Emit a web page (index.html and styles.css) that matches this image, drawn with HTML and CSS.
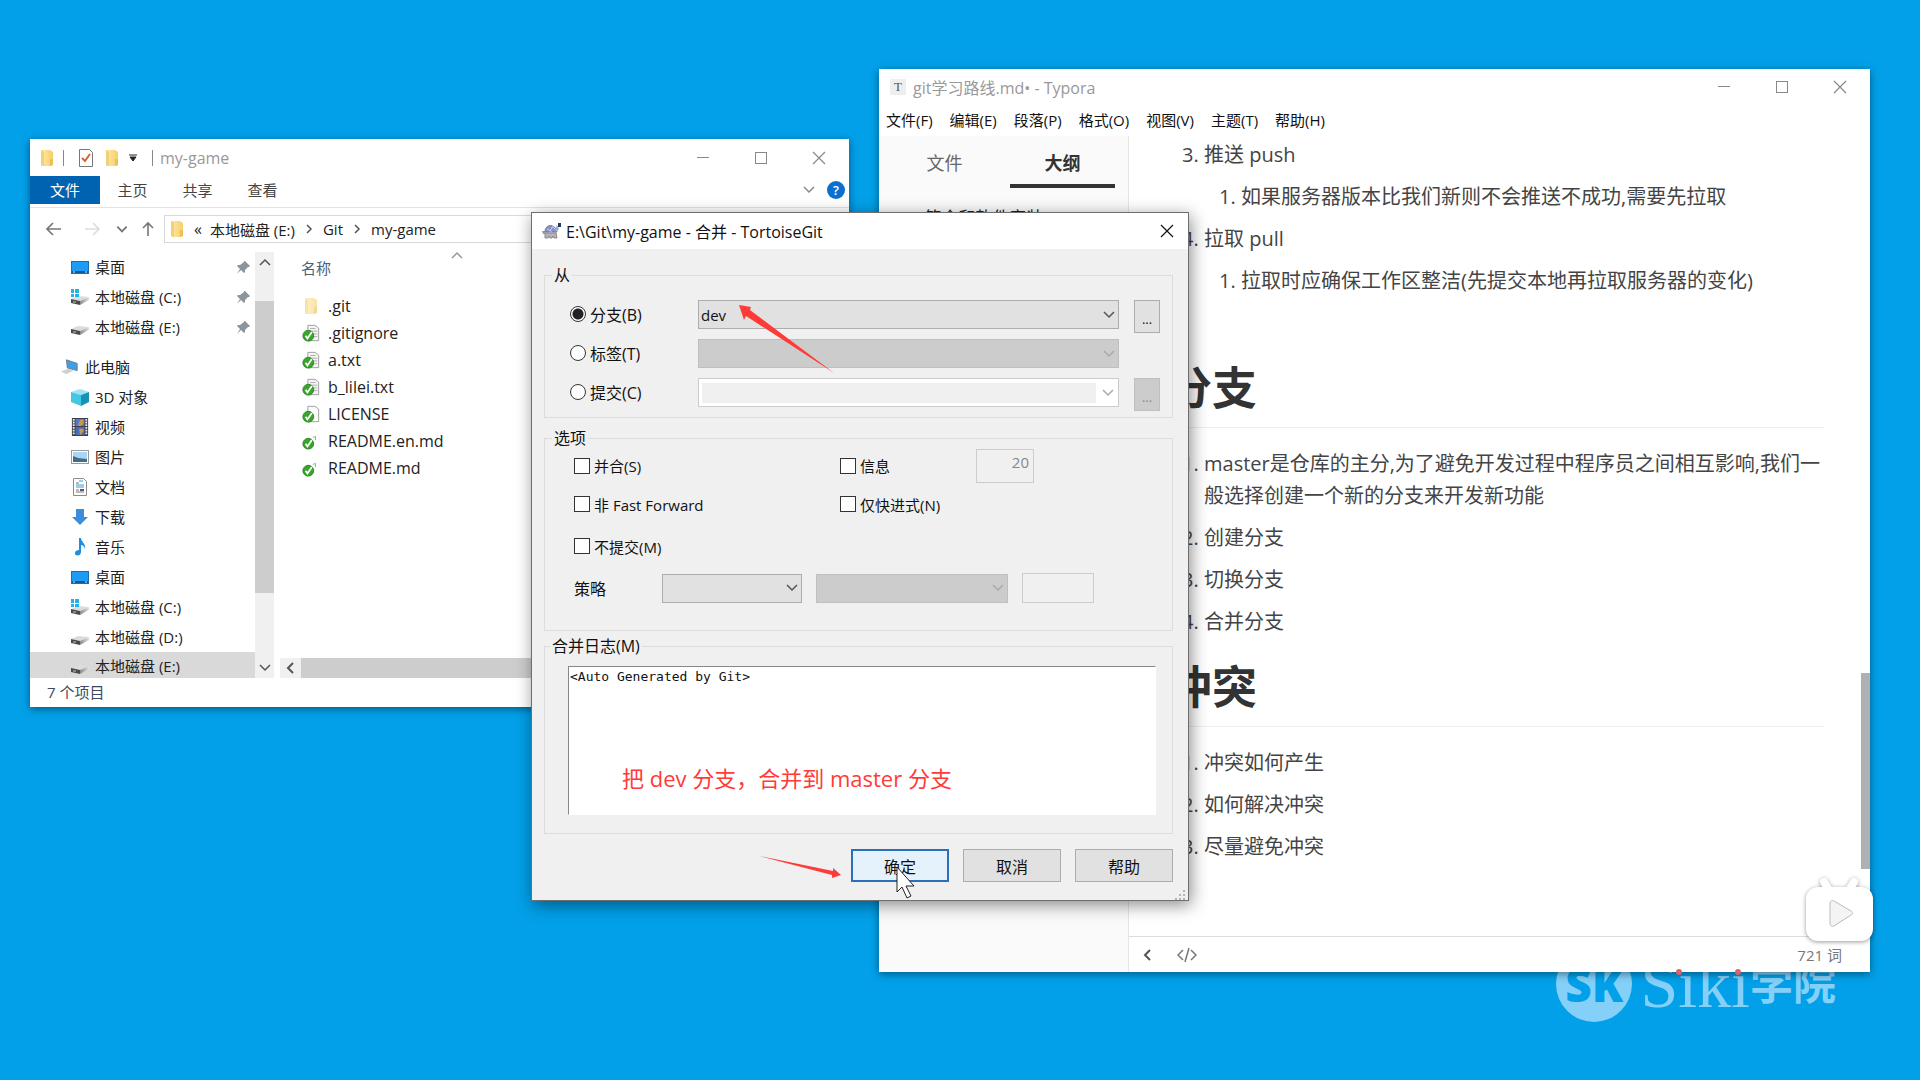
FILE: index.html
```html
<!DOCTYPE html>
<html lang="zh-CN">

<head>
    <meta charset="UTF-8">
    <meta name="viewport" content="width=device-width, initial-scale=1.0">
    <title>TortoiseGit 合并</title>
    <link rel="stylesheet" href="styles.css">
</head>

<body>

    <!-- Shared icons -->
    <svg class="sprite" aria-hidden="true">
        <defs>
            <linearGradient id="gFolder" x1="0" x2="1">
                <stop offset="0" stop-color="#ffe9a6" />
                <stop offset="1" stop-color="#f5cf6a" />
            </linearGradient>
            <linearGradient id="gDisk" x1="0" x2="1">
                <stop offset="0" stop-color="#8b8b8b" />
                <stop offset="1" stop-color="#e2e2e2" />
            </linearGradient>
            <symbol id="folder" viewBox="0 0 18 18">
                <path d="M3 1h9l3 2v13l-3 1H3z" fill="url(#gFolder)" />
                <path d="M3 1l3 2v14l-3-1z" fill="#f3d078" />
                <path d="M12 10h3v6l-3 1z" fill="#eebf55" />
            </symbol>
            <symbol id="desktop" viewBox="0 0 18 18">
                <rect x="0.5" y="3.5" width="17" height="12" fill="#1e9bf5" stroke="#1570b8" />
                <path d="M1 14h16" stroke="#0d5b9c" stroke-width="2" />
                <path d="M2 14h2M14 14h2" stroke="#d8efff" stroke-width="1" />
            </symbol>
            <symbol id="disk" viewBox="0 0 18 18">
                <path d="M0 11l7-3 11 1-9 4z" fill="#dcdcdc" />
                <path d="M0 11l9 2v4l-9-2z" fill="#4a4a4a" />
                <path d="M9 13l9-4v3l-9 5z" fill="url(#gDisk)" />
                <path d="M2 14h3" stroke="#bcd8bc" />
            </symbol>
            <symbol id="windisk" viewBox="0 0 18 18">
                <use href="#disk" />
                <path d="M0 1h3v4H0zM4 1h4v4H4zM0 6h3v3H0zM4 6h4v3H4z" fill="#22b4e8" />
            </symbol>
            <symbol id="pc" viewBox="0 0 20 18">
                <path d="M6 1l12 4v8L7 10z" fill="#3c9fe8" stroke="#6c7a88" />
                <path d="M0 14l8-3 6 2-8 4z" fill="#d0d0d0" />
            </symbol>
            <symbol id="cube" viewBox="0 0 18 18">
                <path d="M0 4l9-3 9 3-8 3z" fill="#9be6f2" />
                <path d="M0 4l10 3v11L0 14z" fill="#43c7e2" />
                <path d="M10 7l8-3v10l-8 4z" fill="#1592b8" />
            </symbol>
            <symbol id="film" viewBox="0 0 18 20">
                <rect width="18" height="20" fill="#3c3c46" />
                <rect x="4" y="1" width="10" height="8" fill="#5b78c8" />
                <rect x="4" y="10" width="10" height="9" fill="#4d6ab8" />
                <path d="M9 2h4v4l-3 3H7zM8 12h5v3l-4 4z" fill="#c89a48" />
                <path d="M2 1v18M16 1v18" stroke="#eee" stroke-width="2" stroke-dasharray="2 1" />
            </symbol>
            <symbol id="image" viewBox="0 0 18 18">
                <rect x="0.5" y="2.5" width="17" height="13" fill="#fff" stroke="#9a9a9a" />
                <rect x="2" y="4" width="14" height="10" fill="#a9d4f5" />
                <path d="M2 8l5 2 9 1v3H2z" fill="#3f6f84" />
            </symbol>
            <symbol id="doc" viewBox="0 0 18 18">
                <path d="M2.5 0.5h10l3 3v14h-13z" fill="#fff" stroke="#8c8c8c" />
                <path d="M5 5h3M5 12h3M5 14h8" stroke="#777" />
                <path d="M8 3h4M5 7h8M5 9h8" stroke="#3c9ad0" />
                <path d="M9 11h4v2H9z" fill="#557" />
            </symbol>
            <symbol id="down" viewBox="0 0 18 18">
                <path d="M5 1h8v8h4l-8 8-8-8h4z" fill="#3c8cdc" />
            </symbol>
            <symbol id="music" viewBox="0 0 18 18">
                <path d="M8 0h2c0 4 5 5 4 11-1-3-2-4-4-4v7c0 5-7 4-6 1 0-2 2-3 4-3z" fill="#1e8ee0" />
            </symbol>
            <symbol id="pin" viewBox="0 0 14 14">
                <path d="M8 1l5 5-1 1h-1L8 10v2l-1 1-3-3-4 4 3-5-3-3 1-1h2l4-3V1z" fill="#8c949c" />
            </symbol>
            <symbol id="txtok" viewBox="0 0 18 20">
                <path d="M5.5 1.5h8l4 3v14h-12z" fill="#f4f4f4" stroke="#999" />
                <path d="M8 5h6M8 8h8M10 11h6M12 14h4" stroke="#aaa" />
                <use href="#ok" />
            </symbol>
            <symbol id="blankok" viewBox="0 0 18 20">
                <path d="M5.5 1.5h8l4 3v14h-12z" fill="#fbfbfb" stroke="#999" />
                <use href="#ok" />
            </symbol>
            <symbol id="mdok" viewBox="0 0 18 20">
                <path d="M11 6l3-1v4" stroke="#9a9a9a" fill="none" stroke-width="1" />
                <use href="#ok" />
            </symbol>
            <g id="ok">
                <circle cx="6" cy="13" r="6" fill="#3aa52c" stroke="#23831b" stroke-width="1" />
                <path d="M3 13l2 3 5-7" fill="none" stroke="#fff" stroke-width="2" />
            </g>
            <symbol id="chevD" viewBox="0 0 12 12">
                <path d="M1 3l5 5 5-5" fill="none" stroke="currentColor" stroke-width="1.5" />
            </symbol>
            <symbol id="chevU" viewBox="0 0 12 12">
                <path d="M1 9l5-5 5 5" fill="none" stroke="currentColor" stroke-width="1.5" />
            </symbol>
            <symbol id="chevL" viewBox="0 0 12 12">
                <path d="M9 1L4 6l5 5" fill="none" stroke="currentColor" stroke-width="2" />
            </symbol>
            <symbol id="chevR" viewBox="0 0 12 12">
                <path d="M4 2l4 4-4 4" fill="none" stroke="currentColor" stroke-width="1.5" />
            </symbol>
            <symbol id="min" viewBox="0 0 14 14">
                <path d="M1 6.5h12" stroke="currentColor" />
            </symbol>
            <symbol id="max" viewBox="0 0 14 14">
                <rect x="1.5" y="1.5" width="11" height="11" fill="none" stroke="currentColor" />
            </symbol>
            <symbol id="close" viewBox="0 0 14 14">
                <path d="M1 1l12 12M13 1L1 13" stroke="currentColor" stroke-width="1.2" />
            </symbol>
        </defs>
    </svg>

    <!-- Wallpaper logo -->
    <div class="watermark">
        <span class="wm-badge">SK</span>
        <span class="wm-latin">Siki</span>
        <span class="wm-han">学院</span>
    </div>

    <!-- File explorer -->
    <section class="window explorer">
        <header class="ex-title">
            <svg class="ic"><use href="#folder" /></svg>
            <i class="bar"></i>
            <svg class="ic task" viewBox="0 0 18 18">
                <path d="M2.5 0.5h10l3 3v14h-13z" fill="#fff" stroke="#777" />
                <path d="M5 9l3 3 5-7" fill="none" stroke="#e0602a" stroke-width="2" />
            </svg>
            <svg class="ic"><use href="#folder" /></svg>
            <svg class="quick" viewBox="0 0 8 8"><path d="M0 1h8M1 3h6L4 7z" stroke="#222" fill="#222" /></svg>
            <i class="bar"></i>
            <span class="ex-name">my-game</span>
            <div class="win-buttons">
                <button aria-label="最小化"><svg><use href="#min" /></svg></button>
                <button aria-label="最大化"><svg><use href="#max" /></svg></button>
                <button aria-label="关闭"><svg><use href="#close" /></svg></button>
            </div>
        </header>
        <nav class="ribbon">
            <button class="active">文件</button>
            <button>主页</button>
            <button>共享</button>
            <button>查看</button>
            <svg class="chev fold"><use href="#chevD" /></svg>
            <span class="help">?</span>
        </nav>
        <div class="address">
            <button aria-label="后退"><svg viewBox="0 0 16 14"><path d="M15 7H1M7 1L1 7l6 6" /></svg></button>
            <button class="off" aria-label="前进"><svg viewBox="0 0 16 14"><path d="M1 7h14M9 1l6 6-6 6" /></svg></button>
            <button class="small" aria-label="历史"><svg viewBox="0 0 12 12"><path d="M2 4l4 4 4-4" /></svg></button>
            <button class="up" aria-label="向上"><svg viewBox="0 0 14 16"><path d="M7 15V2M2 7l5-5 5 5" /></svg></button>
            <div class="path">
                <svg class="ic"><use href="#folder" /></svg>
                <span class="laquo">«</span>
                <a href="#">本地磁盘 (E:)</a>
                <svg class="chev"><use href="#chevR" /></svg>
                <a href="#">Git</a>
                <svg class="chev"><use href="#chevR" /></svg>
                <a href="#">my-game</a>
            </div>
        </div>
        <div class="ex-body">
            <ul class="tree">
                <li><svg class="ic"><use href="#desktop" /></svg>桌面<svg class="pin"><use href="#pin" /></svg></li>
                <li><svg class="ic"><use href="#windisk" /></svg>本地磁盘 (C:)<svg class="pin"><use href="#pin" /></svg></li>
                <li><svg class="ic"><use href="#disk" /></svg>本地磁盘 (E:)<svg class="pin"><use href="#pin" /></svg></li>
                <li class="root"><svg class="ic"><use href="#pc" /></svg>此电脑</li>
                <li><svg class="ic"><use href="#cube" /></svg>3D 对象</li>
                <li><svg class="ic"><use href="#film" /></svg>视频</li>
                <li><svg class="ic"><use href="#image" /></svg>图片</li>
                <li><svg class="ic"><use href="#doc" /></svg>文档</li>
                <li><svg class="ic"><use href="#down" /></svg>下载</li>
                <li><svg class="ic"><use href="#music" /></svg>音乐</li>
                <li><svg class="ic"><use href="#desktop" /></svg>桌面</li>
                <li><svg class="ic"><use href="#windisk" /></svg>本地磁盘 (C:)</li>
                <li><svg class="ic"><use href="#disk" /></svg>本地磁盘 (D:)</li>
                <li class="selected"><svg class="ic"><use href="#disk" /></svg>本地磁盘 (E:)</li>
            </ul>
            <div class="vscroll">
                <svg class="chev"><use href="#chevU" /></svg>
                <div class="track"><i></i></div>
                <svg class="chev"><use href="#chevD" /></svg>
            </div>
            <div class="files">
                <svg class="chev sort"><use href="#chevU" /></svg>
                <table>
                    <thead>
                        <tr><th scope="col">名称</th></tr>
                    </thead>
                    <tbody>
                        <tr><td><svg class="ic pale"><use href="#folder" /></svg>.git</td></tr>
                        <tr><td><svg class="ic"><use href="#txtok" /></svg>.gitignore</td></tr>
                        <tr><td><svg class="ic"><use href="#txtok" /></svg>a.txt</td></tr>
                        <tr><td><svg class="ic"><use href="#txtok" /></svg>b_lilei.txt</td></tr>
                        <tr><td><svg class="ic"><use href="#blankok" /></svg>LICENSE</td></tr>
                        <tr><td><svg class="ic"><use href="#mdok" /></svg>README.en.md</td></tr>
                        <tr><td><svg class="ic"><use href="#mdok" /></svg>README.md</td></tr>
                    </tbody>
                </table>
                <div class="hscroll"><svg class="chev"><use href="#chevL" /></svg><i></i></div>
            </div>
        </div>
        <footer class="ex-status">7 个项目</footer>
    </section>

    <!-- Typora -->
    <section class="window typora">
        <header class="ty-title">
            <span class="ty-logo">T</span>
            <span>git学习路线.md• - Typora</span>
            <div class="win-buttons">
                <button aria-label="最小化"><svg><use href="#min" /></svg></button>
                <button aria-label="最大化"><svg><use href="#max" /></svg></button>
                <button aria-label="关闭"><svg><use href="#close" /></svg></button>
            </div>
        </header>
        <nav class="menu">
            <button>文件(F)</button>
            <button>编辑(E)</button>
            <button>段落(P)</button>
            <button>格式(O)</button>
            <button>视图(V)</button>
            <button>主题(T)</button>
            <button>帮助(H)</button>
        </nav>
        <div class="ty-body">
            <aside class="outline">
                <div class="tabs">
                    <button>文件</button>
                    <button class="active">大纲</button>
                </div>
                <a href="#" class="outline-item">5. 简介和软件安装</a>
            </aside>
            <div class="editor">
                <article>
                    <ol start="3">
                        <li>推送 push
                            <ol>
                                <li>如果服务器版本比我们新则不会推送不成功,需要先拉取</li>
                            </ol>
                        </li>
                        <li>拉取 pull
                            <ol>
                                <li>拉取时应确保工作区整洁(先提交本地再拉取服务器的变化)</li>
                            </ol>
                        </li>
                    </ol>
                    <h1 class="spaced">分支</h1>
                    <ol>
                        <li>master是仓库的主分,为了避免开发过程中程序员之间相互影响,我们一般选择创建一个新的分支来开发新功能</li>
                        <li>创建分支</li>
                        <li>切换分支</li>
                        <li>合并分支</li>
                    </ol>
                    <h1>冲突</h1>
                    <ol>
                        <li>冲突如何产生</li>
                        <li>如何解决冲突</li>
                        <li>尽量避免冲突</li>
                    </ol>
                    <i class="thumb"></i>
                </article>
                <footer class="ty-status">
                    <button aria-label="侧边栏"><svg class="chev"><use href="#chevL" /></svg></button>
                    <button aria-label="源代码模式"><svg class="code" viewBox="0 0 20 14"><path d="M6 2L1 7l5 5M14 2l5 5-5 5M12 0L8 14" /></svg></button>
                    <span>721 词</span>
                </footer>
            </div>
        </div>
    </section>

    <!-- Merge dialog -->
    <section class="window dialog">
        <header class="dl-title">
            <svg class="tortoise" viewBox="0 0 20 16">
                <path d="M3 9c0-8 10-9 12 0z" fill="#8a94cc" stroke="#666e9c" />
                <path d="M5 6l3 2 3-5M9 8v2M11 4l3 3" fill="none" stroke="#c9cff0" />
                <path d="M3 10h11l1 5h-3l-1-2-1 2H8l-1-2-1 2H3z" fill="#b4b4b8" stroke="#88888c" stroke-width="1" />
                <path d="M0 8h3v3H1z" fill="#999" />
                <path d="M13 6l2-4 2 4-3 3z" fill="#a3a8c8" />
                <rect x="16" y="0" width="3" height="4" fill="#223a5c" />
            </svg>
            <span>E:\Git\my-game - 合并 - TortoiseGit</span>
            <button class="dl-close" aria-label="关闭"><svg><use href="#close" /></svg></button>
        </header>
        <form class="dl-body">
            <fieldset class="from">
                <legend>从</legend>
                <label class="opt"><input type="radio" name="from" checked>分支(B)</label>
                <div class="combo">
                    <select aria-label="分支">
                        <option>dev</option>
                    </select>
                    <svg class="chev"><use href="#chevD" /></svg>
                </div>
                <button type="button" class="more">...</button>

                <label class="opt"><input type="radio" name="from">标签(T)</label>
                <div class="combo">
                    <select aria-label="标签" disabled></select>
                    <svg class="chev"><use href="#chevD" /></svg>
                </div>
                <span></span>

                <label class="opt"><input type="radio" name="from">提交(C)</label>
                <div class="combo editable">
                    <input type="text" aria-label="提交" disabled>
                    <svg class="chev"><use href="#chevD" /></svg>
                </div>
                <button type="button" class="more" disabled>...</button>
            </fieldset>

            <fieldset class="options">
                <legend>选项</legend>
                <label class="opt"><input type="checkbox">并合(S)</label>
                <label class="opt"><input type="checkbox">信息</label>
                <input class="num" type="text" value="20" aria-label="信息数量" disabled>
                <label class="opt"><input type="checkbox">非 Fast Forward</label>
                <label class="opt wide"><input type="checkbox">仅快进式(N)</label>
                <label class="opt full"><input type="checkbox">不提交(M)</label>
                <div class="strategy full">
                    <label for="strategy">策略</label>
                    <div class="combo s1">
                        <select id="strategy"></select>
                        <svg class="chev"><use href="#chevD" /></svg>
                    </div>
                    <div class="combo s2">
                        <select aria-label="策略选项" disabled></select>
                        <svg class="chev"><use href="#chevD" /></svg>
                    </div>
                    <input class="s3" type="text" aria-label="策略参数" disabled>
                </div>
            </fieldset>

            <fieldset class="log">
                <legend>合并日志(M)</legend>
                <textarea aria-label="合并日志">&lt;Auto Generated by Git&gt;</textarea>
            </fieldset>

            <div class="actions">
                <button type="button" class="primary">确定</button>
                <button type="button">取消</button>
                <button type="button">帮助</button>
            </div>
        </form>

        <p class="note">把 dev 分支，合并到 master 分支</p>
        <svg class="marks" viewBox="0 0 656 690">
            <path d="M207 92l12 2-1 3 84 63-88-57-2 4z" fill="#ff3b38" />
            <path d="M227 643l74 15 0-3 8 7-9 3 0-3z" fill="#ff3b38" />
            <path d="M365 654v25l5-5 5 11 4-2-5-10h8z" fill="#fff" stroke="#222" />
            <path d="M652 677v2M652 681v2M652 685v2M648 681v2M648 685v2M644 685v2" stroke="#b4b4b4" stroke-width="2" />
        </svg>
    </section>

    <!-- Player badge -->
    <svg class="tv" viewBox="0 0 75 75" role="img" aria-label="播放">
        <path d="M22 9l6 10M52 9l-6 10" stroke="#fff" stroke-width="8" stroke-linecap="round" />
        <rect x="4" y="14" width="67" height="54" rx="12" fill="#fff" />
        <path d="M28 31c0-3 2-4 4-3l17 10c2 1 2 3 0 4L32 53c-2 1-4 0-4-3z" fill="#f4f4f4" stroke="#bbb" stroke-width="1" />
    </svg>
    <i class="dot dot-a"></i>
    <i class="dot dot-b"></i>

</body>

</html>
```
FILE: styles.css
```css
* {
    box-sizing: border-box;
}

body {
    margin: 0;
    min-height: 100vh;
    position: relative;
    overflow: hidden;
    background-color: #02a0e9;
    font-family: "Open Sans", "Noto Sans CJK SC", sans-serif;
    font-size: 15px;
    color: #222;
}

button,
input,
select,
textarea {
    font: inherit;
    color: inherit;
    margin: 0;
}

button {
    border: none;
    background: none;
    padding: 0;
}

a {
    color: inherit;
    text-decoration: none;
}

svg {
    flex: none;
    display: block;
}

.sprite {
    position: absolute;
    width: 0;
    height: 0;
}

.ic {
    width: 18px;
    height: 18px;
}

.chev {
    width: 12px;
    height: 12px;
    color: #555;
}

.window {
    position: absolute;
    display: flex;
    flex-direction: column;
    background-color: white;
    box-shadow: 0 2px 8px rgba(0, 0, 0, 0.45);
}

.win-buttons {
    display: flex;
    gap: 44px;
    margin-left: auto;
    color: #888;
}

.win-buttons svg {
    width: 14px;
    height: 14px;
}

/* Explorer */
.explorer {
    left: 30px;
    top: 139px;
    width: 819px;
}

.ex-title {
    display: flex;
    align-items: center;
    height: 37px;
    padding: 0 23px 0 8px;
}

.bar {
    width: 1px;
    height: 16px;
    margin: 0 7px;
    background-color: #888;
}

.task {
    margin: 0 8px 0 6px;
}

.quick {
    width: 8px;
    height: 8px;
    margin: 0 8px;
}

.ex-name {
    font-size: 16px;
    color: #999;
}

.ribbon {
    display: flex;
    align-items: center;
    height: 32px;
    padding: 0 4px 4px 0;
    border-bottom: 1px solid #e4e4e4;
    color: #444;
}

.ribbon button {
    height: 28px;
    width: 65px;
}

.ribbon .active {
    width: 70px;
    background-color: #0063b1;
    color: white;
}

.fold {
    margin: 0 12px 0 auto;
    color: #888;
}

.help {
    width: 18px;
    height: 18px;
    border-radius: 50%;
    background-color: #0a6fd0;
    color: white;
    font-size: 13px;
    font-weight: 600;
    line-height: 18px;
    text-align: center;
}

.address {
    display: flex;
    align-items: center;
    padding: 7px 0 9px 16px;
}

.address button {
    width: 16px;
    margin-right: 22px;
}

.address button svg {
    width: 16px;
    height: 16px;
    fill: none;
    stroke: #777;
    stroke-width: 1.6;
}

.address .off svg {
    stroke: #ddd;
}

.address .off {
    margin-right: 15px;
}

.address .small {
    margin-right: 9px;
}

.address .small svg {
    width: 14px;
}

.address .up {
    margin-right: 8px;
}

.path {
    flex: 1;
    display: flex;
    align-items: center;
    gap: 8px;
    height: 28px;
    padding-left: 3px;
    border: 1px solid #d9d9d9;
}

.laquo {
    font-size: 16px;
}

.ex-body {
    display: flex;
}

.tree {
    list-style: none;
    margin: 0;
    padding: 0;
    width: 225px;
}

.tree li {
    display: flex;
    align-items: center;
    gap: 6px;
    height: 30px;
    line-height: 30px;
    padding: 0 4px 0 41px;
}

.tree .root {
    margin-top: 10px;
    padding-left: 31px;
}

.tree .selected {
    height: 26px;
    padding-top: 2px;
    overflow: hidden;
    background-color: #d9d9d9;
}

.pin {
    width: 14px;
    height: 14px;
    margin-left: auto;
}

.vscroll {
    width: 19px;
    display: flex;
    flex-direction: column;
    align-items: center;
    padding: 4px 0;
    background-color: #f0f0f0;
}

.track {
    flex: 1;
    align-self: stretch;
    padding: 33px 0 69px;
}

.track i {
    display: block;
    height: 100%;
    background-color: #cdcdcd;
}

.files {
    flex: 1;
    margin-left: 6px;
    display: flex;
    flex-direction: column;
    position: relative;
}

.sort {
    position: absolute;
    left: 171px;
    top: -3px;
    color: #999;
}

.files table {
    border-collapse: collapse;
    margin-left: 21px;
    font-size: 16px;
}

.files th {
    height: 40px;
    padding: 0 0 10px;
    text-align: left;
    font-size: 15px;
    font-weight: 400;
    color: #4c607a;
}

.files td {
    display: flex;
    align-items: center;
    gap: 8px;
    height: 27px;
    padding: 0 0 0 1px;
}

.pale {
    opacity: 0.6;
}

.hscroll {
    display: flex;
    align-items: center;
    gap: 5px;
    height: 20px;
    margin-top: auto;
    padding-left: 4px;
    background-color: #f0f0f0;
}

.hscroll i {
    flex: 1;
    height: 100%;
    background-color: #cdcdcd;
}

.ex-status {
    height: 29px;
    padding-left: 17px;
    line-height: 28px;
    color: #3c4a60;
}

/* Typora */
.typora {
    left: 879px;
    right: 50px;
    top: 69px;
    bottom: 108px;
}

.ty-title {
    display: flex;
    align-items: center;
    height: 36px;
    padding: 0 23px 0 11px;
    font-size: 16px;
    color: #999;
}

.ty-logo {
    width: 16px;
    margin-right: 7px;
    background-color: #eee;
    color: #555;
    font-family: "Liberation Serif", serif;
    font-size: 13px;
    line-height: 16px;
    text-align: center;
}

.menu {
    display: flex;
    gap: 17px;
    height: 31px;
    padding: 0 7px 3px;
    color: #111;
}

.ty-body {
    flex: 1;
    display: flex;
    min-height: 0;
}

.outline {
    width: 250px;
    overflow: hidden;
    background-color: #fafafa;
    border-right: 1px solid #e6e6e6;
}

.tabs {
    display: flex;
    justify-content: space-between;
    padding: 0 13px;
}

.tabs button {
    width: 105px;
    height: 52px;
    padding-top: 4px;
    border-bottom: 4px solid transparent;
    font-size: 18px;
    color: #666;
}

.tabs .active {
    border-color: #333;
    color: #333;
    font-weight: 700;
}

.outline-item {
    display: block;
    padding: 18px 0 0 27px;
    font-size: 17px;
    line-height: 24px;
}

.editor {
    flex: 1;
    min-width: 0;
    display: flex;
    flex-direction: column;
}

article {
    flex: 1;
    position: relative;
    padding: 3px 46px 0 38px;
    font-size: 20px;
    line-height: 32px;
    color: #444;
}

article ol {
    margin: 0;
    padding-left: 37px;
}

article li {
    margin-bottom: 10px;
}

article li ol {
    padding-top: 10px;
    padding-left: 37px;
}

article h1 {
    margin: 22px 0 20px;
    padding-bottom: 12px;
    border-bottom: 1px solid #eee;
    font-size: 45px;
    line-height: 54px;
    color: #333;
}

article .spaced {
    margin-top: 64px;
}

.thumb {
    position: absolute;
    right: 0;
    bottom: 67px;
    width: 9px;
    height: 196px;
    background-color: #b0b0b0;
}

.ty-status {
    display: flex;
    align-items: center;
    gap: 24px;
    height: 36px;
    padding: 0 28px 0 12px;
    border-top: 1px solid #ddd;
    color: #777;
}

.ty-status span {
    margin-left: auto;
}

.code {
    width: 20px;
    height: 14px;
    fill: none;
    stroke: #777;
    stroke-width: 1.5;
}

/* Merge dialog */
.dialog {
    left: 531px;
    top: 212px;
    width: 658px;
    border: 1px solid #6e6e6e;
    background-color: #f0f0f0;
    box-shadow: 2px 4px 16px rgba(0, 0, 0, 0.45);
    font-size: 16px;
    color: #111;
}

.dl-title {
    display: flex;
    align-items: center;
    gap: 4px;
    height: 36px;
    padding: 0 14px 0 10px;
    background-color: white;
}

.tortoise {
    width: 20px;
    height: 16px;
}

.dl-close {
    margin-left: auto;
}

.dl-close svg {
    width: 14px;
    height: 14px;
}

.dl-body {
    padding: 16px 15px 18px 12px;
}

fieldset {
    margin: 0;
    padding: 0;
    min-width: 0;
    border: 1px solid #dcdcdc;
}

/* legends hang left of the group padding */
legend {
    margin-left: -18px;
    padding: 0 2px;
    line-height: 20px;
}

.from {
    display: grid;
    grid-template-columns: 128px 1fr 26px;
    grid-auto-rows: 39px;
    align-items: start;
    padding: 15px 12px 0 25px;
}

.from .combo {
    margin-right: 15px;
}

.opt {
    display: flex;
    align-items: center;
    gap: 4px;
    height: 27px;
    white-space: nowrap;
}

.opt input {
    appearance: none;
    width: 16px;
    height: 16px;
    border: 1px solid #333;
    background-color: white;
}

.opt input[type="radio"] {
    border-radius: 50%;
}

.opt input[type="radio"]:checked {
    background: radial-gradient(circle, #222 0 5px, white 6px);
}

.combo {
    display: grid;
    align-items: center;
    height: 29px;
}

.combo > * {
    grid-area: 1 / 1;
}

.combo select {
    appearance: none;
    width: 100%;
    height: 29px;
    padding: 0 2px;
    border: 1px solid #adadad;
    border-radius: 0;
    background-color: #e1e1e1;
    font-size: 15px;
}

.combo select:disabled {
    border-color: #bfbfbf;
    background-color: #ccc;
    opacity: 1;
}

.combo .chev {
    justify-self: end;
    margin-right: 4px;
    pointer-events: none;
}

.combo select:disabled + .chev,
.editable .chev {
    color: #aaa;
}

.editable {
    border: 1px solid #ccc;
    background-color: white;
}

.editable input {
    width: calc(100% - 25px);
    height: 20px;
    margin-left: 3px;
    border: none;
    background-color: #f0f0f0;
}

.more {
    height: 33px;
    padding-top: 4px;
    border: 1px solid #adadad;
    background-color: #e1e1e1;
    font-size: 13px;
}

.more:disabled {
    border-color: #bfbfbf;
    background-color: #ccc;
    color: #888;
}

.options {
    display: grid;
    grid-template-columns: 266px 136px 1fr;
    grid-template-rows: 35px 42px 42px 42px;
    align-items: center;
    margin-top: 10px;
    padding: 0 0 21px 29px;
    font-size: 15px;
}

.options legend {
    margin-left: -22px;
}

.options legend,
.strategy label {
    font-size: 16px;
}

.wide {
    grid-column: span 2;
}

.full {
    grid-column: 1 / -1;
}

.num,
.s3 {
    border: 1px solid #ccc;
    background-color: #f0f0f0;
}

.num {
    width: 58px;
    height: 34px;
    padding: 0 4px 8px;
    text-align: right;
    color: #888;
}

.strategy {
    display: flex;
    align-items: center;
    gap: 14px;
}

.strategy label {
    width: 74px;
}

.s1 {
    width: 140px;
}

.s2 {
    width: 192px;
}

.s3 {
    width: 72px;
    height: 30px;
}

.log {
    margin-top: 5px;
    padding: 10px 16px 18px 23px;
}

.log textarea {
    display: block;
    width: 100%;
    height: 149px;
    padding: 2px 1px;
    border: 1px solid white;
    border-top-color: #888;
    border-left-color: #888;
    resize: none;
    font-family: "DejaVu Sans Mono", monospace;
    font-size: 13px;
    line-height: 16px;
}

.actions {
    display: flex;
    justify-content: flex-end;
    gap: 14px;
    margin-top: 15px;
}

.actions button {
    width: 98px;
    height: 33px;
    border: 1px solid #adadad;
    background-color: #e1e1e1;
}

.actions .primary {
    border: 2px solid #2b6fb8;
    background-color: #e5f1fb;
}

.note {
    position: absolute;
    left: 90px;
    top: 549px;
    margin: 0;
    font-size: 22px;
    line-height: 32px;
    color: #ff3b38;
}

.marks {
    position: absolute;
    left: 0;
    top: 0;
    width: 656px;
    height: 690px;
    pointer-events: none;
}

/* Logos on the desktop */
.watermark {
    position: absolute;
    right: 84px;
    bottom: 58px;
    display: flex;
    align-items: center;
    color: #84d0f8;
    line-height: 76px;
}

.wm-badge {
    width: 76px;
    margin-right: 8px;
    border-radius: 50%;
    background-color: #84d0f8;
    color: #02a0e9;
    font-size: 46px;
    font-weight: 800;
    text-align: center;
}

.wm-latin {
    font-family: "Liberation Serif", serif;
    font-size: 68px;
}

.wm-han {
    font-size: 43px;
    font-weight: 700;
}

.tv {
    position: absolute;
    right: 43px;
    bottom: 132px;
    width: 75px;
    height: 75px;
    filter: drop-shadow(0 1px 2px rgba(0, 0, 0, 0.4));
}

.dot {
    position: absolute;
    bottom: 105px;
    width: 6px;
    height: 6px;
    border-radius: 50%;
    background-color: #d9606c;
}

.dot-a {
    right: 238px;
}

.dot-b {
    right: 179px;
}
```
